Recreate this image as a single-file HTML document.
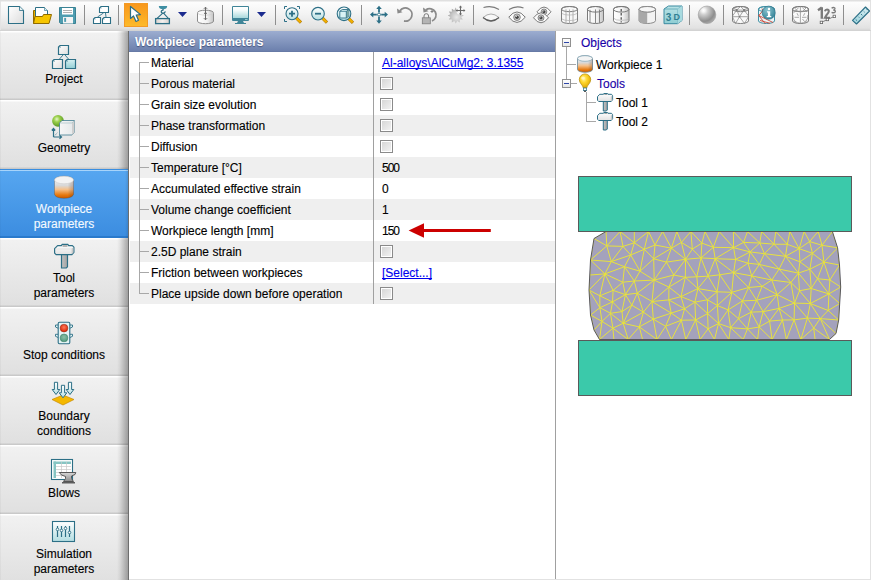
<!DOCTYPE html>
<html><head><meta charset="utf-8"><style>
*{box-sizing:border-box}
html,body{margin:0;padding:0;width:871px;height:580px;overflow:hidden;background:#fff;font-family:"Liberation Sans", sans-serif;font-size:12px;color:#000}
.pt,.pv,.bl,.tt{-webkit-text-stroke:0.12px currentColor}
#tb{position:absolute;left:0;top:0;width:871px;height:31px;background:linear-gradient(#e0e0e0 0,#e0e0e0 1px,#fdfdfd 2px,#f3f3f3 14px,#e2e2e2 28px,#d6d6d6 30px,#d0d0d0 31px)}
.sep{position:absolute;top:5px;width:1px;height:20px;background:#8e8e8e}
.ti{position:absolute;top:3px;width:24px;height:24px}
#sb{position:absolute;left:0;top:31px;width:129px;height:549px;overflow:hidden;background:#e4e4e4}
.btn{position:absolute;left:0;width:128px;height:69px;background:linear-gradient(#ffffff 0,#ffffff 1px,#f1f1f1 2px,#e0e0e0 67px,#c9c9c9 68px,#c9c9c9 69px)}
.btn:after{content:"";position:absolute;left:0;top:0;width:128px;height:69px;background:linear-gradient(90deg,rgba(0,0,0,0.07) 0,rgba(0,0,0,0) 1px,rgba(0,0,0,0) 117px,rgba(0,0,0,0.06) 120px,rgba(0,0,0,0.28) 127px,rgba(0,0,0,0.3) 128px)}
.btn.sel{background:linear-gradient(#3a8ee0 0,#3a8ee0 1px,#a8d4fa 1px,#a8d4fa 2px,#56a6f0 2px,#3c8de0 67px,#2a7acc 67px,#2a7acc 69px);color:#f4faff}
.btn.sel:after{background:linear-gradient(90deg,rgba(0,0,0,0.05) 0,rgba(0,0,0,0) 1px,rgba(0,0,0,0) 125px,rgba(0,0,0,0.1) 128px)}
.bl{position:absolute;left:0;width:128px;text-align:center;line-height:15px;white-space:nowrap}
.bi{position:absolute;left:52px;width:24px;height:24px}
#sbline{position:absolute;left:128px;top:31px;width:1px;height:549px;background:#6e6e6e}
#pn{position:absolute;left:129px;top:31px;width:426px;height:549px;background:#fff;overflow:hidden}
#hd{position:absolute;left:129px;top:31px;width:426px;height:21px;background:linear-gradient(#9cadd0,#6c80ad 20px,#62759f 21px);color:#fff;font-weight:bold;line-height:21px;padding-left:6px;padding-top:1px;text-shadow:0 1px 1px rgba(40,50,90,0.6)}
.row{position:absolute;left:130px;width:425px;height:21px}
.pt{position:absolute;left:151px;line-height:21px;padding-top:1px;white-space:nowrap;color:#000}
.pv{position:absolute;left:382px;line-height:21px;padding-top:1px;white-space:nowrap;color:#000}
.lnk{color:#0000ee;text-decoration:underline;text-decoration-skip-ink:none}
.hl{position:absolute;left:139px;width:10px;height:1px;background:#a8a8a8}
#vl{position:absolute;left:139px;top:62px;width:1px;height:231px;background:#a8a8a8}
#colsep{position:absolute;left:373px;top:52px;width:1px;height:252px;background:#a0a0a0}
.cb{position:absolute;left:380px;width:13px;height:13px;border:1px solid #8a8a8a;background:linear-gradient(135deg,#d4d4d4,#f4f4f4);box-shadow:inset 0 0 0 1px #fff}
#split{position:absolute;left:555px;top:31px;width:1px;height:549px;background:#a0a0a0}
#tr{position:absolute;left:556px;top:31px;width:315px;height:549px;background:#fff}
.tt{position:absolute;white-space:nowrap;line-height:15px}
.exp{position:absolute;left:562px;width:9px;height:9px;border:1px solid #909090;background:linear-gradient(#fff,#e6e6e6)}
.exp:after{content:"";position:absolute;left:1px;top:3px;width:5px;height:1px;background:#2d46a8}
</style></head><body>
<div id="tb"><div class="sep" style="left:84px"></div><div class="sep" style="left:118px"></div><div class="sep" style="left:222px"></div><div class="sep" style="left:275px"></div><div class="sep" style="left:361px"></div><div class="sep" style="left:473px"></div><div class="sep" style="left:689px"></div><div class="sep" style="left:723px"></div><div class="sep" style="left:783px"></div><div class="sep" style="left:843px"></div><div style="position:absolute;left:870px;top:1px;width:1px;height:29px;background:#e2e2e2"></div><div style="position:absolute;left:0;top:1px;width:1px;height:29px;background:#e4e4e4"></div><svg style="position:absolute;left:0;top:0" width="871" height="31" viewBox="0 0 871 31"><defs>
<linearGradient id="gpage" x1="0" y1="0" x2="1" y2="1"><stop offset="0" stop-color="#ffffff"/><stop offset="1" stop-color="#dcdcdc"/></linearGradient>
<linearGradient id="gorange" x1="0" y1="0" x2="0" y2="1"><stop offset="0" stop-color="#f8961c"/><stop offset="1" stop-color="#fdbb2a"/></linearGradient>
<linearGradient id="gscreen" x1="0" y1="0" x2="0" y2="1"><stop offset="0" stop-color="#ffffff"/><stop offset="0.3" stop-color="#f4fbfb"/><stop offset="1" stop-color="#a9d9dc"/></linearGradient>
<linearGradient id="glens" x1="0" y1="0" x2="0" y2="1"><stop offset="0" stop-color="#ffffff"/><stop offset="1" stop-color="#b6dfe2"/></linearGradient>
<radialGradient id="gsphere" cx="0.33" cy="0.27" r="0.8" fx="0.3" fy="0.25"><stop offset="0" stop-color="#ffffff"/><stop offset="0.12" stop-color="#f4f4f4"/><stop offset="0.3" stop-color="#cfcfcf"/><stop offset="0.75" stop-color="#8e8e8e"/><stop offset="1" stop-color="#b0b0b0"/></radialGradient>
<linearGradient id="gcube" x1="0" y1="0" x2="0" y2="1"><stop offset="0" stop-color="#b9e3e6"/><stop offset="1" stop-color="#8fcdd3"/></linearGradient>
<linearGradient id="gcylr" x1="0" y1="0" x2="1" y2="0"><stop offset="0" stop-color="#ffffff"/><stop offset="0.6" stop-color="#f2f2f2"/><stop offset="1" stop-color="#c4c4c4"/></linearGradient>
<radialGradient id="ginfo" cx="0.4" cy="0.3" r="0.8"><stop offset="0" stop-color="#8ac3cf"/><stop offset="1" stop-color="#2b7d92"/></radialGradient>
<linearGradient id="gbase" x1="0" y1="0" x2="1" y2="0"><stop offset="0" stop-color="#d8d0cc"/><stop offset="0.5" stop-color="#f4f2f0"/><stop offset="1" stop-color="#d8d0cc"/></linearGradient>
<radialGradient id="gsun" cx="0.55" cy="0.6" r="0.6"><stop offset="0" stop-color="#e8e8e8"/><stop offset="0.6" stop-color="#c4c4c4"/><stop offset="1" stop-color="#a0a0a0"/></radialGradient>
<linearGradient id="gruler" x1="0" y1="0" x2="0" y2="1"><stop offset="0" stop-color="#d6eef2"/><stop offset="1" stop-color="#9dd3dc"/></linearGradient>
</defs><path d="M8.5 6.5H19.5L23.5 10.5V23.5H8.5Z" fill="url(#gpage)" stroke="#2c6f86" stroke-width="1.1"/><path d="M19.5 6.5V10.5H23.5" fill="#e8f3f5" stroke="#2c6f86" stroke-width="0.8"/><path d="M33.5 10.5H37L38 11.5H46.5V23.5H33.5Z" fill="#e9ad00" stroke="#8f6a00" stroke-width="1"/><path d="M35.5 7.5H44.5L47.5 10.5V17H35.5Z" fill="#fff" stroke="#2c6f86" stroke-width="1"/><path d="M44.5 7.5V10.5H47.5" fill="#d8eef2" stroke="#2c6f86" stroke-width="0.6"/><path d="M33.5 23.5L35 16.5H42.5L43.5 14.5H51.5L49 23.5Z" fill="#f6c500" stroke="#8f6a00" stroke-width="1"/><path d="M59.5 7.5H75.5V23.5H60.5L59.5 22.5Z" fill="#4f9db0" stroke="#3a8294" stroke-width="1"/><rect x="62" y="8" width="11" height="6.5" fill="#fff"/><rect x="63" y="10" width="9" height="0.9" fill="#a8a8a8"/><rect x="63" y="12" width="9" height="0.9" fill="#a8a8a8"/><rect x="63" y="17" width="10" height="6.5" fill="#f4f4f4"/><rect x="64.2" y="17.9" width="1.9" height="4" fill="#4f9db0"/><path d="M101 6.5H108.5V12.5H99.5V8Z" fill="#fff" stroke="#2c6f86" stroke-width="1.1"/><rect x="100.5" y="7.5" width="1" height="1" fill="#2c6f86" opacity="0.7"/><path d="M95 17.5H100.5V23.5H93.5V19Z" fill="#fff" stroke="#2c6f86" stroke-width="1.1"/><rect x="94.5" y="18.5" width="1" height="1" fill="#2c6f86" opacity="0.7"/><path d="M104 17.5H110.5V23.5H102.5V19Z" fill="#fff" stroke="#2c6f86" stroke-width="1.1"/><rect x="103.5" y="18.5" width="1" height="1" fill="#2c6f86" opacity="0.7"/><path d="M103.5 13L97.5 17M105.5 13L106 17" stroke="#2c6f86" stroke-width="0.9" fill="none"/><rect x="124" y="3" width="24" height="24" fill="url(#gorange)"/><rect x="124.5" y="3.5" width="23" height="23" fill="none" stroke="#f39a25" stroke-width="1"/><path d="M130.5 6.5V18.5L133.5 16L136 21.5L138.5 20.3L136.2 15L140.5 14.6Z" fill="#fff" stroke="#2c6f86" stroke-width="1.2" stroke-linejoin="round"/><path d="M158.8 6H167.2Q167 9.2 163 9.2Q159 9.2 158.8 6Z" fill="#3f8fa3"/><path d="M163 9V10C161 10.3 160.6 12.6 162.3 13.1C163.8 13.5 165 12.6 165.3 11.3" stroke="#2c6f86" stroke-width="1.3" fill="none"/><path d="M162.8 13.2L156.5 18.8M163.5 13.2L168.8 18.8" stroke="#2c6f86" stroke-width="1.1" fill="none"/><rect x="155.6" y="18.6" width="13.8" height="5" fill="url(#gbase)" stroke="#2c6f86" stroke-width="1.3"/><path d="M178 12H187L182.5 17Z" fill="#1b2b8e"/><path d="M257 12H266L261.5 17Z" fill="#1b2b8e"/><path d="M197.5 12.7V21.2A8 2.5 0 0 0 213.5 21.2V12.7A8 2.5 0 0 0 197.5 12.7Z" fill="url(#gcylr)" stroke="#8c8c8c" stroke-width="1"/><path d="M197.5 12.7A8 2.5 0 0 0 213.5 12.7" fill="none" stroke="#d0d0d0" stroke-width="0.7"/><path d="M205.5 7.2V19.8M203.9 8.8L205.5 7.2L207.1 8.8M203.9 18.2L205.5 19.8L207.1 18.2M204 13.3H207" stroke="#6a6a6a" stroke-width="1" fill="none"/><rect x="232" y="6" width="17" height="15" rx="1" fill="#3f8598"/><rect x="233" y="7" width="15" height="11" fill="url(#gscreen)"/><rect x="245" y="19" width="2.5" height="0.8" fill="#a9d9dc"/><path d="M238 21H243L244 23H246V24H235V23H237Z" fill="#3f8598"/><path d="M284.5 9V6.5H287M297 6.5H299.5V9M284.5 19V21.5H287" stroke="#2c6f86" stroke-width="1" fill="none"/><path d="M295.5 17.2L301 22.7" stroke="#b07a10" stroke-width="3.2" stroke-linecap="butt"/><path d="M295.5 17.2L300.6 22.299999999999997" stroke="#f0b000" stroke-width="2.2" stroke-linecap="butt"/><circle cx="292" cy="13.7" r="6" fill="url(#glens)" stroke="#2c6f86" stroke-width="1.1"/><path d="M289 13.7H295M292 10.7V16.7" stroke="#2c6f86" stroke-width="1.8"/><path d="M321.5 17.2L327 22.7" stroke="#b07a10" stroke-width="3.2" stroke-linecap="butt"/><path d="M321.5 17.2L326.6 22.299999999999997" stroke="#f0b000" stroke-width="2.2" stroke-linecap="butt"/><circle cx="318" cy="13.7" r="6.3" fill="url(#glens)" stroke="#2c6f86" stroke-width="1.1"/><path d="M315 13.7H321" stroke="#2c6f86" stroke-width="1.8"/><path d="M347.5 17.3L353 22.8" stroke="#b07a10" stroke-width="3.2" stroke-linecap="butt"/><path d="M347.5 17.3L352.6 22.4" stroke="#f0b000" stroke-width="2.2" stroke-linecap="butt"/><circle cx="344" cy="13.8" r="6.8" fill="url(#glens)" stroke="#2c6f86" stroke-width="1.1"/><path d="M339.8 11.3L342.3 9.5H348.8V16.2L346.3 18H339.8Z" fill="#d8f3f5" stroke="#2c6f86" stroke-width="0.9" stroke-linejoin="round"/><path d="M346.3 11.3V18L348.8 16.2V9.5Z" fill="#7aa5a2"/><path d="M339.8 11.3H346.3V18M346.3 11.3L348.8 9.5" stroke="#2c6f86" stroke-width="0.8" fill="none"/><path d="M379 8V12.5M379 16.8V21.5M371.5 14.6H376.8M381.2 14.6H386" stroke="#2c6f86" stroke-width="1.8"/><path d="M379 5.8L376.2 9H381.8ZM379 23.8L376.2 20.5H381.8ZM370 14.6L373.3 11.8V17.4ZM388 14.6L384.7 11.8V17.4Z" fill="#2c6f86"/><circle cx="379" cy="14.6" r="1.5" fill="#fff" stroke="#2c6f86" stroke-width="0.9"/><path d="M400 10.8A6.6 6.6 0 1 1 404 21" stroke="#8a8a8a" stroke-width="1.8" fill="none"/><path d="M397 8.5L402.5 12.3L397.5 13.5Z" fill="#8a8a8a"/><path d="M426 9.8A6.4 6.4 0 1 1 432 21" stroke="#8a8a8a" stroke-width="1.8" fill="none"/><path d="M423 7.5L428.5 11.3L423.5 12.5Z" fill="#8a8a8a"/><rect x="422.3" y="17.8" width="8" height="6" fill="#b4b4b4" stroke="#7e7e7e" stroke-width="0.8"/><path d="M424 17.8V16A2.3 2.3 0 0 1 428.6 16V17.8" stroke="#7a7a7a" stroke-width="1" fill="none"/><path d="M430.5 11.5H433.5M432 10V13" stroke="#6e6e6e" stroke-width="0.8"/><polygon points="463.80,15.60 461.21,17.05 462.73,19.60 459.76,19.56 459.80,22.53 457.25,21.01 455.80,23.60 454.35,21.01 451.80,22.53 451.84,19.56 448.87,19.60 450.39,17.05 447.80,15.60 450.39,14.15 448.87,11.60 451.84,11.64 451.80,8.67 454.35,10.19 455.80,7.60 457.25,10.19 459.80,8.67 459.76,11.64 462.73,11.60 461.21,14.15" fill="url(#gsun)"/><circle cx="461" cy="10.3" r="4.9" fill="#f6f6f6"/><path d="M460.5 6.8V14.2M456.8 10.5H464.2" stroke="#6a6a6a" stroke-width="1.1"/><path d="M460.5 5.6L458.9 7.4H462.1ZM460.5 15.4L458.9 13.6H462.1ZM455.6 10.5L457.4 8.9V12.1ZM465.4 10.5L463.6 8.9V12.1Z" fill="#6a6a6a"/><path d="M483.5 7.5Q492 5 499 9.5" stroke="#7a7a7a" stroke-width="1.1" fill="none"/><path d="M483 17.5Q491 10.5 499 17.5Q491 24.5 483 17.5Z" fill="#f8f8f8" stroke="#9a9a9a" stroke-width="0.8"/><path d="M483 17.5Q491 24.5 499 17.5" stroke="#5e5e5e" stroke-width="1.3" fill="none"/><path d="M509 9.5Q516 5 523.5 8" stroke="#7a7a7a" stroke-width="1.2" fill="none"/><path d="M508.75 17.2Q517 6.699999999999999 525.25 17.2Q517 27.7 508.75 17.2Z" fill="#fbfbfb" stroke="#6a6a6a" stroke-width="0.9"/><circle cx="517" cy="17.2" r="3.3" fill="#cfcfcf" stroke="#707070" stroke-width="0.8"/><circle cx="517" cy="17.2" r="1.8" fill="#454545"/><circle cx="516.3" cy="16.4" r="0.55" fill="#f0f0f0"/><path d="M537.0 11.8Q544 2.3000000000000007 551.0 11.8Q544 21.3 537.0 11.8Z" fill="#fbfbfb" stroke="#6a6a6a" stroke-width="0.9"/><circle cx="544" cy="11.8" r="2.8049999999999997" fill="#cfcfcf" stroke="#707070" stroke-width="0.8"/><circle cx="544" cy="11.8" r="1.53" fill="#454545"/><circle cx="543.405" cy="11.120000000000001" r="0.4675" fill="#f0f0f0"/><path d="M533.5 17.8Q541 7.800000000000001 548.5 17.8Q541 27.8 533.5 17.8Z" fill="#fbfbfb" stroke="#6a6a6a" stroke-width="0.9"/><circle cx="541" cy="17.8" r="2.9699999999999998" fill="#cfcfcf" stroke="#707070" stroke-width="0.8"/><circle cx="541" cy="17.8" r="1.62" fill="#454545"/><circle cx="540.37" cy="17.080000000000002" r="0.49500000000000005" fill="#f0f0f0"/><path d="M561.5 9.1L561.5 20.9A8.0 2.6 0 0 0 577.5 20.9L577.5 9.1A8.0 2.6 0 0 0 561.5 9.1Z" fill="#f7f7f7" stroke="#7e7e7e" stroke-width="1"/><ellipse cx="569.5" cy="9.1" rx="8.0" ry="2.6" fill="none" stroke="#7e7e7e" stroke-width="1"/><path d="M566 9.3V22.8M569.5 9.5V23M573 9.3V22.8" stroke="#a0a0a0" stroke-width="0.8"/><path d="M562 13.5A8 2.4 0 0 0 577 13.5M562 19A8 2.4 0 0 0 577 19" stroke="#b0b0b0" stroke-width="0.7" fill="none"/><path d="M587.5 9.3L587.5 20.7A8.0 2.8 0 0 0 603.5 20.7L603.5 9.3A8.0 2.8 0 0 0 587.5 9.3Z" fill="url(#gcylr)" stroke="#7a7a7a" stroke-width="1"/><ellipse cx="595.5" cy="9.3" rx="8.0" ry="2.8" fill="none" stroke="#7a7a7a" stroke-width="1"/><path d="M590 9.8V22.5M595.5 9.4V23.2M599.5 9.6V22.8" stroke="#7a7a7a" stroke-width="0.9"/><path d="M613.5 9.3L613.5 20.7A7.75 2.8 0 0 0 629.0 20.7L629.0 9.3A7.75 2.8 0 0 0 613.5 9.3Z" fill="url(#gcylr)" stroke="#7a7a7a" stroke-width="1"/><ellipse cx="621.25" cy="9.3" rx="7.75" ry="2.8" fill="none" stroke="#7a7a7a" stroke-width="1"/><path d="M621.2 9V22.5" stroke="#4a4a4a" stroke-width="1.2" stroke-dasharray="2.5 1.6"/><path d="M614 18.5A7.7 2.4 0 0 0 629 18.5" stroke="#b0b0b0" stroke-width="0.7" fill="none"/><path d="M639 9.3L639 20.7A8.25 2.8 0 0 0 655.5 20.7L655.5 9.3A8.25 2.8 0 0 0 639 9.3Z" fill="#f2f2f2" stroke="#8a8a8a" stroke-width="1"/><ellipse cx="647.25" cy="9.3" rx="8.25" ry="2.8" fill="none" stroke="#8a8a8a" stroke-width="1"/><path d="M639 9.3V20.7A8.25 2.8 0 0 0 647.2 23.5V9.3Z" fill="#a8a8a8"/><ellipse cx="647.25" cy="9.3" rx="8.25" ry="2.8" fill="#f6f6f6" stroke="#8a8a8a" stroke-width="1"/><path d="M664 9L668.5 6H682V20.5L677.5 23.7H664Z" fill="url(#gcube)" stroke="#3b8aa0" stroke-width="1"/><path d="M664 9H677.5V23.7M677.5 9L682 6" stroke="#5aa2b2" stroke-width="0.8" fill="none"/><path d="M677.5 9L682 6V20.5L677.5 23.7Z" fill="#a8dadf"/><text x="665.8" y="20.5" font-family="Liberation Sans" font-weight="bold" font-size="10" fill="#2f7f93">3</text><text x="673.5" y="19.5" font-family="Liberation Sans" font-weight="bold" font-size="9" fill="#2f7f93">D</text><circle cx="707" cy="14.8" r="8.8" fill="url(#gsphere)" stroke="#9a9a9a" stroke-width="0.6"/><path d="M732.5 9.1L732.5 20.9A8.0 2.6 0 0 0 748.5 20.9L748.5 9.1A8.0 2.6 0 0 0 732.5 9.1Z" fill="#fafafa" stroke="#7e7e7e" stroke-width="1"/><ellipse cx="740.5" cy="9.1" rx="8.0" ry="2.6" fill="none" stroke="#7e7e7e" stroke-width="1"/><path d="M732.5 10.1H748.5M732.5 16.7H748.5M740.5 6.6L736.8 9.9L739.5 16.7L744 9.9L740.5 6.6M733 7.8L736.8 9.9M748 7.8L744 9.9M736.8 9.9L732.5 16M744 9.9L748.5 16M739.5 16.7L735.5 23.5M739.5 16.7L744.5 23.5M732.5 16.7L735.5 23.5M748.5 16.7L744.5 23.5" stroke="#8a8a8a" stroke-width="0.75" fill="none"/><circle cx="736.8" cy="9.9" r="0.9" fill="#777"/><circle cx="744" cy="9.9" r="0.9" fill="#777"/><circle cx="739.5" cy="16.7" r="0.8" fill="#777"/><path d="M758.5 9.1L758.5 20.9A8.0 2.6 0 0 0 774.5 20.9L774.5 9.1A8.0 2.6 0 0 0 758.5 9.1Z" fill="#eaf6f8" stroke="#3f8fa3" stroke-width="1"/><ellipse cx="766.5" cy="9.1" rx="8.0" ry="2.6" fill="none" stroke="#3f8fa3" stroke-width="1"/><path d="M766 7L758.8 15.5L765 23.5M758.8 15.5L773 22.5M762 8.5L764 14M760 20.5L770 23.3" stroke="#cc4636" stroke-width="0.9" fill="none"/><circle cx="768.7" cy="12.7" r="6.6" fill="url(#ginfo)" stroke="#2b7186" stroke-width="0.6"/><circle cx="769" cy="9" r="1.2" fill="#fff"/><path d="M767 11.2H770.2V16.1H771.3V17.3H766.7V16.1H767.9V12.4H767Z" fill="#fff"/><path d="M792.5 9.1L792.5 20.9A8.0 2.6 0 0 0 808.5 20.9L808.5 9.1A8.0 2.6 0 0 0 792.5 9.1Z" fill="#fafafa" stroke="#7a7a7a" stroke-width="1"/><ellipse cx="800.5" cy="9.1" rx="8.0" ry="2.6" fill="none" stroke="#7a7a7a" stroke-width="1"/><path d="M800.4 6.5V23.8M792.5 11.2H808.5M794 7.5L798.5 12M798.5 7.8L793 13.5M802.5 7.8L807 12M806.5 7.5L802 12M794.5 17.3H799M802 17.3H806.5M797 13.2L798.3 15.8M803.5 15.8L804.8 13.2M793 15A7.5 7 0 0 0 800.4 23.3A7.5 7 0 0 0 807.8 15M794 20.5L795.5 22.5M806.8 20.5L805.3 22.5M802.5 19L804.5 21.5" stroke="#8e8e8e" stroke-width="0.75" fill="none"/><path d="M821.8 7.3V18.8M818 10.2L821.8 7.6" stroke="#7a7a7a" stroke-width="2.4" fill="none"/><path d="M824.9 11.2Q825.3 9.5 827 9.5Q828.8 9.5 828.8 11.3Q828.8 12.8 826.6 15L825 17.7H830" stroke="#7a7a7a" stroke-width="2.1" fill="none" stroke-linejoin="miter"/><path d="M831.6 8.3Q833.2 6.9 834.8 8Q835.6 9.5 833.4 10Q836 10.6 835.2 12Q833.8 13.3 831.6 12.3" stroke="#7a7a7a" stroke-width="1.3" fill="none"/><path d="M821.4 22.4L827.4 19.5L834.3 16.4" stroke="#777" stroke-width="0.8"/><rect x="820.2" y="21.2" width="2.4" height="2.4" fill="#fff" stroke="#666" stroke-width="0.8"/><rect x="826.2" y="18.3" width="2.4" height="2.4" fill="#fff" stroke="#666" stroke-width="0.8"/><rect x="833.1" y="15.2" width="2.4" height="2.4" fill="#fff" stroke="#666" stroke-width="0.8"/><path d="M852.5 20.3L865.5 7L869.5 11L856.5 24Z" fill="url(#gruler)" stroke="#2c6f86" stroke-width="1.1" stroke-linejoin="round"/><path d="M855.7 19.4L857 20.7M858.4 16.7L859.3 17.6M861 14L862.3 15.3M863.7 11.3L864.6 12.2M866.3 8.7L867.6 10" stroke="#2c6f86" stroke-width="0.9"/></svg></div>
<div id="sb"><div class="btn" style="top:0px"><div class="bi" style="top:14px"></div><div class="bl" style="top:41px">Project</div></div>
<div class="btn" style="top:69px"><div class="bi" style="top:14px"></div><div class="bl" style="top:41px">Geometry</div></div>
<div class="btn sel" style="top:138px"><div class="bi" style="top:7px"></div><div class="bl" style="top:33px">Workpiece</div><div class="bl" style="top:48px">parameters</div></div>
<div class="btn" style="top:207px"><div class="bi" style="top:7px"></div><div class="bl" style="top:33px">Tool</div><div class="bl" style="top:48px">parameters</div></div>
<div class="btn" style="top:276px"><div class="bi" style="top:14px"></div><div class="bl" style="top:41px">Stop conditions</div></div>
<div class="btn" style="top:345px"><div class="bi" style="top:7px"></div><div class="bl" style="top:33px">Boundary</div><div class="bl" style="top:48px">conditions</div></div>
<div class="btn" style="top:414px"><div class="bi" style="top:14px"></div><div class="bl" style="top:41px">Blows</div></div>
<div class="btn" style="top:483px"><div class="bi" style="top:7px"></div><div class="bl" style="top:33px">Simulation</div><div class="bl" style="top:48px">parameters</div></div></div>
<svg style="position:absolute;left:0;top:0" width="129" height="580" viewBox="0 0 129 580"><defs>
<linearGradient id="sfill" x1="0" y1="0" x2="1" y2="1"><stop offset="0" stop-color="#ffffff"/><stop offset="1" stop-color="#dedede"/></linearGradient>
<linearGradient id="stealf" x1="0" y1="0" x2="0" y2="1"><stop offset="0" stop-color="#d6f0f2"/><stop offset="1" stop-color="#93cfd5"/></linearGradient>
<radialGradient id="sgreen" cx="0.4" cy="0.35" r="0.7"><stop offset="0" stop-color="#e6f7c8"/><stop offset="0.35" stop-color="#9bd04c"/><stop offset="1" stop-color="#4f8f1d"/></radialGradient>
<linearGradient id="scube" x1="0" y1="0" x2="1" y2="0"><stop offset="0" stop-color="#f6f6f6"/><stop offset="1" stop-color="#e4e8ea"/></linearGradient>
<linearGradient id="swp" x1="0" y1="0" x2="0" y2="1"><stop offset="0" stop-color="#ffffff"/><stop offset="0.42" stop-color="#d8d8d8"/><stop offset="0.6" stop-color="#f5c08a"/><stop offset="0.85" stop-color="#e6780e"/><stop offset="1" stop-color="#c85a00"/></linearGradient>
<linearGradient id="swph" x1="0" y1="0" x2="1" y2="0"><stop offset="0" stop-color="#000" stop-opacity="0"/><stop offset="0.7" stop-color="#000" stop-opacity="0"/><stop offset="1" stop-color="#602000" stop-opacity="0.25"/></linearGradient>
<linearGradient id="shammer" x1="0" y1="0" x2="0" y2="1"><stop offset="0" stop-color="#ffffff"/><stop offset="1" stop-color="#e2e2e2"/></linearGradient>
<linearGradient id="shandle" x1="0" y1="0" x2="1" y2="0"><stop offset="0" stop-color="#c2c2c2"/><stop offset="1" stop-color="#a2a2a2"/></linearGradient>
<radialGradient id="sred" cx="0.5" cy="0.4" r="0.6"><stop offset="0" stop-color="#ff7a5a"/><stop offset="1" stop-color="#d82000"/></radialGradient>
<radialGradient id="sgrn" cx="0.5" cy="0.4" r="0.6"><stop offset="0" stop-color="#8cc0a8"/><stop offset="1" stop-color="#4f9a7e"/></radialGradient>
<linearGradient id="sarrow" x1="0" y1="0" x2="0" y2="1"><stop offset="0" stop-color="#ffffff"/><stop offset="1" stop-color="#b8e0e4"/></linearGradient>
<linearGradient id="sanvil" x1="0" y1="0" x2="0" y2="1"><stop offset="0" stop-color="#d8d8d8"/><stop offset="1" stop-color="#8a8a8a"/></linearGradient>
<linearGradient id="sbox" x1="0" y1="0" x2="0" y2="1"><stop offset="0" stop-color="#ffffff"/><stop offset="1" stop-color="#b2dde1"/></linearGradient>
<radialGradient id="sbulb" cx="0.4" cy="0.35" r="0.65"><stop offset="0" stop-color="#fff3b0"/><stop offset="0.4" stop-color="#ffd830"/><stop offset="1" stop-color="#e0a800"/></radialGradient>
</defs><path d="M60 45.5H68.5V54.5H58.5V47Z" fill="url(#sfill)" stroke="#2c6f86" stroke-width="1.2"/><rect x="59.6" y="46.6" width="1" height="1" fill="#2c6f86"/><path d="M54 59.5H62.5V68.5H52.5V61Z" fill="url(#sfill)" stroke="#2c6f86" stroke-width="1.2"/><rect x="53.6" y="60.6" width="1" height="1" fill="#2c6f86"/><path d="M67 59.5H75.5V68.5H65.5V61Z" fill="url(#stealf)" stroke="#2c6f86" stroke-width="1.2"/><rect x="66.6" y="60.6" width="1" height="1" fill="#2c6f86"/><path d="M63 55L59.5 59M65 55L68.5 59" stroke="#2c6f86" stroke-width="0.9"/><path d="M53.5 137V129M51.8 130.5L53.5 128.5L55.2 130.5M53.5 137H61M59.5 135.3L61.5 137L59.5 138.7" stroke="#2c6f86" stroke-width="1.2" fill="none"/><path d="M54 136.5L57.5 132.5" stroke="#2c6f86" stroke-width="0.7" stroke-dasharray="1 1"/><circle cx="58" cy="120.9" r="5.9" fill="url(#sgreen)"/><path d="M59.5 123L62 120.5H74.5V132.5L72 135H59.5Z" fill="url(#scube)" stroke="#2c6f86" stroke-width="0.9" stroke-opacity="0.8"/><path d="M72 123V135L74.5 132.5V120.5Z" fill="#cfcfcf"/><path d="M59.5 123H72L74.5 120.5" stroke="#9ab8c0" stroke-width="0.6" fill="none"/><path d="M54.5 180V194.5L55 195A9 3.3 0 0 0 73 195L73.5 194.5V180A9.5 3.8 0 0 0 54.5 180Z" fill="url(#swp)" stroke="#4a3a30" stroke-width="0.6" stroke-opacity="0.5"/><path d="M54.5 180V194.5L55 195A9 3.3 0 0 0 73 195L73.5 194.5V180Z" fill="url(#swph)"/><ellipse cx="64" cy="180" rx="9.5" ry="3.8" fill="#f3f3f3" stroke="#c4c4c4" stroke-width="0.5"/><path d="M61.5 254.5H67.5V266.8L66.3 268H61.5Z" fill="url(#shandle)" stroke="#2c6f86" stroke-width="1.2"/><path d="M54.6 248.6L57.6 245.6H61.6L62 244.4H68L68.4 245.6H72.4L73.9 247.1V252.3L71.9 254.6H56.1L54.6 253.1Z" fill="url(#shammer)" stroke="#2c6f86" stroke-width="1.2" stroke-linejoin="round"/><path d="M62.4 245H67.6L67.4 247H62.6Z" fill="#b4b4b4"/><path d="M71.6 248.6V254H72L73.3 252.4V247.4Z" fill="#c8c8c8"/><path d="M55.5 249H72" stroke="#d8d8d8" stroke-width="0.6"/><path d="M58 325H55.5V327L58 328.2M70 325H72.5V327L70 328.2M58 334.3H55.5V336.3L58 337.5M70 334.3H72.5V336.3L70 337.5" fill="#e6f4f5" stroke="#2c6f86" stroke-width="0.9"/><rect x="58.2" y="322.2" width="11.6" height="21.5" rx="1.2" fill="#e4f4f5" stroke="#2c6f86" stroke-width="1.1"/><circle cx="64" cy="328.1" r="3.9" fill="url(#sred)" stroke="#8a2a1a" stroke-width="0.5"/><circle cx="64" cy="337.9" r="3.9" fill="url(#sgrn)" stroke="#3a7a62" stroke-width="0.5"/><path d="M52 399.5L63 395L74 399.5L63 405Z" fill="#f4b800" stroke="#c88a00" stroke-width="0.7"/><path d="M54.4 382.3H57.6V389.5H59.8L56 394.5L52.2 389.5H54.4Z" fill="url(#sarrow)" stroke="#2c6f86" stroke-width="1"/><path d="M68.4 382.3H71.6V389.5H73.8L70 394.5L66.2 389.5H68.4Z" fill="url(#sarrow)" stroke="#2c6f86" stroke-width="1"/><path d="M61.4 385.3H64.6V392.8H66.8L63 397.8L59.2 392.8H61.4Z" fill="url(#sarrow)" stroke="#2c6f86" stroke-width="1"/><rect x="51.5" y="459.5" width="21" height="20" fill="#fff" stroke="#2c6f86" stroke-width="1.1"/><rect x="53.5" y="461.5" width="17.5" height="2.5" fill="#86c5c3"/><rect x="53.5" y="461.5" width="2.5" height="16.5" fill="#86c5c3"/><path d="M56 466.5H71M56 469.5H71M56 472.5H71M56 475.5H71M61.5 462V478M66.5 462V478" stroke="#c8c8c8" stroke-width="0.7"/><path d="M59.3 472.5H75.8L75 474.5L71.5 476V478.5L73.5 481.5H63.5L65.5 478.5V476.5L61.5 475Z" fill="url(#sanvil)" stroke="#4a4a4a" stroke-width="0.9" stroke-linejoin="round"/><path d="M62 482.8H75" stroke="#3a3a3a" stroke-width="1.2"/><rect x="52.5" y="521.5" width="22" height="20" fill="url(#sbox)" stroke="#2c6f86" stroke-width="1.1"/><path d="M57.5 526V537" stroke="#2c6f86" stroke-width="1.2"/><circle cx="57.5" cy="529.4" r="1.3" fill="#fff" stroke="#2c6f86" stroke-width="0.9"/><path d="M61.5 526V537" stroke="#2c6f86" stroke-width="1.2"/><circle cx="61.5" cy="530.5" r="1.3" fill="#fff" stroke="#2c6f86" stroke-width="0.9"/><path d="M65.5 526V537" stroke="#2c6f86" stroke-width="1.2"/><circle cx="65.5" cy="528.4" r="1.3" fill="#fff" stroke="#2c6f86" stroke-width="0.9"/><path d="M69.5 526V537" stroke="#2c6f86" stroke-width="1.2"/><circle cx="69.5" cy="532.5" r="1.3" fill="#fff" stroke="#2c6f86" stroke-width="0.9"/></svg>
<div id="sbline"></div>
<div id="pn"></div>
<div id="hd">Workpiece parameters</div>
<div class="row" style="top:52px;background:#ffffff"></div>
<div class="hl" style="top:62px"></div>
<div class="pt" style="top:52px">Material</div>
<div class="pv lnk" style="top:52px">Al-alloys\AlCuMg2; 3.1355</div>
<div class="row" style="top:73px;background:#efefef"></div>
<div class="hl" style="top:83px"></div>
<div class="pt" style="top:73px">Porous material</div>
<div class="cb" style="top:77px"></div>
<div class="row" style="top:94px;background:#ffffff"></div>
<div class="hl" style="top:104px"></div>
<div class="pt" style="top:94px">Grain size evolution</div>
<div class="cb" style="top:98px"></div>
<div class="row" style="top:115px;background:#efefef"></div>
<div class="hl" style="top:125px"></div>
<div class="pt" style="top:115px">Phase transformation</div>
<div class="cb" style="top:119px"></div>
<div class="row" style="top:136px;background:#ffffff"></div>
<div class="hl" style="top:146px"></div>
<div class="pt" style="top:136px">Diffusion</div>
<div class="cb" style="top:140px"></div>
<div class="row" style="top:157px;background:#efefef"></div>
<div class="hl" style="top:167px"></div>
<div class="pt" style="top:157px">Temperature [°C]</div>
<div class="pv" style="top:157px;letter-spacing:-1px">500</div>
<div class="row" style="top:178px;background:#ffffff"></div>
<div class="hl" style="top:188px"></div>
<div class="pt" style="top:178px">Accumulated effective strain</div>
<div class="pv" style="top:178px;letter-spacing:-1px">0</div>
<div class="row" style="top:199px;background:#efefef"></div>
<div class="hl" style="top:209px"></div>
<div class="pt" style="top:199px">Volume change coefficient</div>
<div class="pv" style="top:199px;letter-spacing:-1px">1</div>
<div class="row" style="top:220px;background:#ffffff"></div>
<div class="hl" style="top:230px"></div>
<div class="pt" style="top:220px">Workpiece length [mm]</div>
<div class="pv" style="top:220px;letter-spacing:-1px">150</div>
<div class="row" style="top:241px;background:#efefef"></div>
<div class="hl" style="top:251px"></div>
<div class="pt" style="top:241px">2.5D plane strain</div>
<div class="cb" style="top:245px"></div>
<div class="row" style="top:262px;background:#ffffff"></div>
<div class="hl" style="top:272px"></div>
<div class="pt" style="top:262px">Friction between workpieces</div>
<div class="pv lnk" style="top:262px">[Select...]</div>
<div class="row" style="top:283px;background:#efefef"></div>
<div class="hl" style="top:293px"></div>
<div class="pt" style="top:283px">Place upside down before operation</div>
<div class="cb" style="top:287px"></div>
<div id="vl"></div>
<div id="colsep"></div>
<svg style="position:absolute;left:400px;top:218px" width="100" height="25" viewBox="400 218 100 25"><path d="M424 228.9H490.8V232H424Z" fill="#cc0000"/><path d="M408.6 230.45L424 223.2V237.7Z" fill="#cc0000"/></svg>
<div id="split"></div>
<div id="tr"></div>
<div class="exp" style="top:38px"></div><div class="exp" style="top:79px"></div><div style="position:absolute;left:566px;top:47px;width:1px;height:32px;background:#a8a8a8"></div><div style="position:absolute;left:567px;top:64px;width:9px;height:1px;background:#a8a8a8"></div><div style="position:absolute;left:571px;top:83px;width:6px;height:1px;background:#a8a8a8"></div><div style="position:absolute;left:586px;top:92px;width:1px;height:30px;background:#a8a8a8"></div><div style="position:absolute;left:587px;top:102px;width:9px;height:1px;background:#a8a8a8"></div><div style="position:absolute;left:587px;top:121px;width:9px;height:1px;background:#a8a8a8"></div><div class="tt" style="left:581px;top:36px;color:#1800a8">Objects</div><div class="tt" style="left:596px;top:57.5px">Workpiece 1</div><div class="tt" style="left:597px;top:76.5px;color:#1800a8">Tools</div><div class="tt" style="left:616px;top:96px">Tool 1</div><div class="tt" style="left:616px;top:115px">Tool 2</div><svg style="position:absolute;left:0;top:0" width="871" height="140" viewBox="0 0 871 140"><path d="M577.5 58.5V69.5A7.5 2.8 0 0 0 592.5 69.5V58.5A7.5 2.8 0 0 0 577.5 58.5Z" fill="url(#swp)" stroke="#6a8898" stroke-width="0.8"/><path d="M577.5 58.5V69.5A7.5 2.8 0 0 0 592.5 69.5V58.5Z" fill="url(#swph)"/><ellipse cx="585" cy="58.5" rx="7.5" ry="2.8" fill="#f4f4f4" stroke="#7fa3b3" stroke-width="0.7"/><path d="M583.3 88C583 85 579.3 83.5 579.3 79.6A5.7 5.7 0 0 1 590.7 79.6C590.7 83.5 587 85 586.7 88Z" fill="url(#sbulb)" stroke="#b48a00" stroke-width="0.7"/><rect x="583.4" y="88" width="3.2" height="2.6" fill="#fff" stroke="#3d7f96" stroke-width="0.8"/><rect x="584" y="90.6" width="2" height="1.2" fill="#333"/><ellipse cx="583" cy="78" rx="1.8" ry="1.5" fill="#fff6c8" opacity="0.8"/><g transform="translate(0 0)"><path d="M603.3 101.3H607.3V110L606.3 111H603.3Z" fill="url(#shandle)" stroke="#2c6f86" stroke-width="1"/><path d="M597.5 96.7L599.7 94.3H603.5L603.8 93.5H607.6L607.9 94.3H611.5L612.6 95.7V99.7L611.2 101.5H598.7L597.5 100.3Z" fill="url(#shammer)" stroke="#2c6f86" stroke-width="1" stroke-linejoin="round"/><path d="M604.2 93.9H607.2L607 95H604.4Z" fill="#a8a8a8"/><path d="M610.8 96.5V101H611.6L612.2 99.5V96Z" fill="#c8c8c8"/></g><g transform="translate(0 19)"><path d="M603.3 101.3H607.3V110L606.3 111H603.3Z" fill="url(#shandle)" stroke="#2c6f86" stroke-width="1"/><path d="M597.5 96.7L599.7 94.3H603.5L603.8 93.5H607.6L607.9 94.3H611.5L612.6 95.7V99.7L611.2 101.5H598.7L597.5 100.3Z" fill="url(#shammer)" stroke="#2c6f86" stroke-width="1" stroke-linejoin="round"/><path d="M604.2 93.9H607.2L607 95H604.4Z" fill="#a8a8a8"/><path d="M610.8 96.5V101H611.6L612.2 99.5V96Z" fill="#c8c8c8"/></g></svg>
<svg style="position:absolute;left:0;top:0" width="871" height="580" viewBox="0 0 871 580">
<defs><clipPath id="wc"><polygon points="606,231.5 594,238.5 590.5,260 589,290 590.5,315 594,330 599.5,339.5 829.5,339.5 836,333.5 838.7,320 840.7,287 839.5,265 837.6,247.8 832.4,231.5"/></clipPath></defs>
<polygon points="606,231.5 594,238.5 590.5,260 589,290 590.5,315 594,330 599.5,339.5 829.5,339.5 836,333.5 838.7,320 840.7,287 839.5,265 837.6,247.8 832.4,231.5" fill="#a4a2bc"/>
<path d="M634.3 231.5L634.3 242.8M756.6 300.3L763.1 311.7M751.2 312.1L742.5 300.9M684.6 308.8L668.8 299.9M613.9 339.5L628.2 339.5M594.0 238.5L606.8 245.9M690.9 231.5L676.8 231.5M701.0 257.9L701.9 243.1M799.2 248.7L787.3 244.3M828.9 293.9L828.2 310.5M790.9 282.5L799.5 290.8M799.2 248.7L809.6 241.5M676.8 231.5L662.6 231.5M772.0 339.5L769.6 321.1M681.0 296.6L668.8 299.9M707.6 313.6L708.1 328.8M700.1 339.5L714.5 339.5M818.2 231.5L822.0 245.3M748.6 287.5L731.8 292.3M782.5 320.0L794.1 319.9M676.8 231.5L681.4 242.4M685.8 339.5L695.6 320.0M714.5 339.5L728.9 339.5M742.5 300.9L738.5 318.7M644.3 249.3L655.0 245.0M785.5 256.3L799.2 248.7M715.2 258.7L733.6 272.6M623.2 323.3L639.3 326.9M644.3 249.3L634.3 242.8M785.5 256.3L774.0 244.2M815.1 339.5L829.5 339.5M800.8 339.5L813.7 328.1M728.1 309.9L730.5 327.7M644.3 249.3L630.7 255.0M637.3 293.2L631.8 305.2M731.8 292.3L719.8 274.8M715.2 258.7L701.0 257.9M799.2 248.7L812.4 253.3M701.0 257.9L713.3 247.3M811.2 288.5L817.5 278.7M751.7 275.9L748.0 263.2M701.0 257.9L696.8 276.8M810.3 303.5L828.2 310.5M681.0 296.6L697.9 288.6M610.5 313.3L622.0 311.6M815.1 339.5L813.7 328.1M733.6 247.7L743.6 242.4M714.5 339.5L708.1 328.8M681.0 296.6L684.6 308.8M624.5 266.7L634.3 281.0M671.4 248.2L681.4 242.4M750.1 251.9L748.0 263.2M657.0 339.5L639.3 326.9M690.9 231.5L692.3 249.1M708.1 276.2L719.8 274.8M640.0 271.2L634.3 281.0M823.9 262.1L817.5 278.7M764.4 253.7L779.1 269.1M785.5 256.3L764.4 253.7M681.4 242.4L692.3 249.1M623.2 323.3L610.5 313.3M800.8 339.5L815.1 339.5M751.7 275.9L762.1 286.3M662.6 231.5L671.4 248.2M790.9 282.5L798.4 273.1M653.3 319.1L652.0 301.5M624.5 266.7L630.7 255.0M671.2 313.1L681.4 320.2M748.6 287.5L742.5 300.9M613.1 290.4L625.4 294.6M594.0 330.0L602.0 321.4M640.0 271.2L630.7 255.0M829.5 339.5L820.2 318.6M742.5 300.9L756.6 300.3M839.5 265.0L837.6 247.8M701.0 257.9L685.6 259.3M701.0 257.9L708.1 276.2M837.6 247.8L832.4 231.5M653.3 319.1L639.3 326.9M733.6 272.6L719.8 274.8M666.4 262.1L673.8 275.0M671.2 313.1L652.0 301.5M590.5 260.0L589.8 275.0M631.8 305.2L625.4 294.6M772.0 339.5L782.5 320.0M750.1 251.9L735.6 259.4M743.2 339.5L730.5 327.7M657.0 339.5L653.3 319.1M794.5 303.1L779.1 308.4M589.8 275.0L589.0 290.0M761.6 231.5L747.5 231.5M613.1 290.4L622.8 282.2M789.9 231.5L787.3 244.3M747.5 231.5L733.4 231.5M779.1 308.4L794.1 319.9M620.1 231.5L606.8 245.9M622.8 282.2L625.4 294.6M610.5 313.3L612.5 301.9M761.6 231.5L759.8 243.0M642.6 339.5L657.0 339.5M671.4 339.5L665.6 326.3M782.5 320.0L779.1 308.4M589.0 290.0L604.9 273.9M648.5 231.5L634.3 231.5M640.0 271.2L624.5 266.7M800.8 339.5L794.1 319.9M648.5 231.5L644.3 249.3M695.6 320.0L681.4 320.2M654.2 280.1L668.9 287.1M812.4 253.3L809.6 241.5M828.9 293.9L829.9 280.0M828.9 293.9L811.2 288.5M719.2 231.5L733.6 247.7M820.2 318.6L813.7 328.1M759.3 264.4L748.0 263.2M790.9 282.5L777.2 294.7M839.7 303.5L828.9 293.9M715.2 258.7L735.6 259.4M751.2 312.1L738.5 318.7M610.5 313.3L599.9 307.7M599.8 295.8L612.5 301.9M840.7 287.0L829.9 280.0M624.5 266.7L611.3 261.6M685.3 277.3L696.8 276.8M718.5 323.5L730.5 327.7M782.5 320.0L769.6 321.1M717.1 291.8L731.8 292.3M707.4 299.8L717.4 305.5M599.9 307.7L602.0 321.4M812.4 253.3L823.9 262.1M809.9 269.2L817.5 278.7M628.2 339.5L642.6 339.5M747.5 328.9L751.2 312.1M777.2 294.7L771.8 280.0M654.2 280.1L634.3 281.0M610.5 313.3L612.9 328.2M662.6 231.5L648.5 231.5M671.2 313.1L653.3 319.1M785.5 256.3L787.3 244.3M628.2 339.5L612.9 328.2M728.9 339.5L743.2 339.5M822.0 245.3L809.6 241.5M644.3 249.3L640.0 271.2M700.1 339.5L695.6 320.0M774.0 244.2L759.8 243.0M810.3 303.5L811.2 288.5M648.5 231.5L655.0 245.0M777.2 294.7L756.6 300.3M820.2 318.6L828.2 310.5M733.4 231.5L743.6 242.4M733.6 272.6L751.7 275.9M648.5 231.5L634.3 242.8M666.4 262.1L654.2 280.1M701.0 257.9L692.3 249.1M715.2 258.7L719.8 274.8M738.5 318.7L730.5 327.7M829.5 339.5L836.0 333.5M837.6 247.8L822.0 245.3M807.4 318.1L794.1 319.9M612.5 301.9L622.0 311.6M822.0 245.3L823.9 262.1M713.3 247.3L701.9 243.1M836.0 333.5L838.7 320.0M764.4 253.7L759.3 264.4M764.4 253.7L774.0 244.2M695.6 320.0L694.9 302.1M751.2 312.1L756.6 300.3M777.2 294.7L779.1 308.4M832.4 231.5L818.2 231.5M715.2 258.7L713.3 247.3M828.9 293.9L817.5 278.7M771.8 280.0L779.1 269.1M798.4 273.1L779.1 269.1M785.5 256.3L798.4 273.1M839.5 265.0L823.9 262.1M606.0 231.5L620.1 231.5M818.2 231.5L804.1 231.5M590.5 315.0L594.0 330.0M810.3 303.5L828.9 293.9M810.3 303.5L820.2 318.6M589.0 290.0L599.9 307.7M684.6 308.8L681.4 320.2M620.1 231.5L634.3 242.8M665.6 326.3L671.2 313.1M771.8 280.0L751.7 275.9M829.9 280.0L823.9 262.1M798.4 273.1L799.9 261.8M628.2 339.5L639.3 326.9M623.2 323.3L622.0 311.6M671.4 248.2L653.7 258.8M733.6 247.7L735.6 259.4M625.4 294.6L622.0 311.6M809.9 269.2L799.9 261.8M820.2 318.6L807.4 318.1M705.0 231.5L701.9 243.1M671.4 339.5L681.4 320.2M695.6 320.0L707.6 313.6M715.2 258.7L733.6 247.7M818.2 231.5L809.6 241.5M731.8 292.3L717.4 305.5M637.3 293.2L652.0 301.5M829.5 339.5L813.7 328.1M715.2 258.7L708.1 276.2M589.0 290.0L590.5 315.0M809.9 269.2L811.2 288.5M676.8 231.5L671.4 248.2M717.1 291.8L697.9 288.6M590.5 260.0L604.9 273.9M604.9 273.9L624.5 266.7M748.6 287.5L751.7 275.9M733.4 231.5L719.2 231.5M654.2 280.1L652.0 301.5M637.3 293.2L625.4 294.6M747.5 328.9L738.5 318.7M657.0 339.5L671.4 339.5M719.2 231.5L713.3 247.3M623.2 323.3L643.4 312.1M718.5 323.5L728.1 309.9M665.6 326.3L653.3 319.1M735.6 259.4L748.0 263.2M634.3 231.5L620.1 231.5M612.5 301.9L599.9 307.7M599.5 339.5L602.0 321.4M750.1 251.9L759.8 243.0M794.5 303.1L799.5 290.8M748.6 287.5L756.6 300.3M625.4 294.6L634.3 281.0M705.0 231.5L713.3 247.3M654.2 280.1L673.8 275.0M653.7 258.8L655.0 245.0M757.6 339.5L772.0 339.5M685.6 259.3L696.8 276.8M668.8 299.9L668.9 287.1M684.6 308.8L694.9 302.1M599.5 339.5L612.9 328.2M733.6 247.7L713.3 247.3M757.6 339.5L759.1 327.0M631.8 305.2L622.0 311.6M681.0 296.6L694.9 302.1M625.4 294.6L612.5 301.9M654.2 280.1L640.0 271.2M589.0 290.0L599.8 295.8M717.1 291.8L719.8 274.8M759.3 264.4L750.1 251.9M836.0 333.5L820.2 318.6M685.6 259.3L685.3 277.3M743.2 339.5L747.5 328.9M610.5 313.3L602.0 321.4M790.9 282.5L779.1 269.1M799.2 248.7L799.9 261.8M673.8 275.0L685.3 277.3M685.3 277.3L668.9 287.1M718.5 323.5L707.6 313.6M623.0 246.4L634.3 242.8M707.6 313.6L694.9 302.1M604.9 273.9L599.8 295.8M786.4 339.5L782.5 320.0M804.1 231.5L799.2 248.7M769.6 321.1L779.1 308.4M728.9 339.5L718.5 323.5M717.1 291.8L717.4 305.5M697.9 288.6L694.9 302.1M838.7 320.0L828.2 310.5M775.8 231.5L787.3 244.3M790.9 282.5L794.5 303.1M790.9 282.5L771.8 280.0M599.8 295.8L599.9 307.7M623.0 246.4L630.7 255.0M673.8 275.0L685.6 259.3M747.5 231.5L759.8 243.0M631.8 305.2L643.4 312.1M681.0 296.6L685.3 277.3M653.3 319.1L643.4 312.1M838.7 320.0L839.7 303.5M832.4 231.5L822.0 245.3M690.9 231.5L681.4 242.4M613.1 290.4L612.5 301.9M743.2 339.5L757.6 339.5M742.5 300.9L728.1 309.9M620.1 231.5L623.0 246.4M697.9 288.6L696.8 276.8M611.3 261.6L630.7 255.0M623.2 323.3L631.8 305.2M811.2 288.5L799.5 290.8M622.8 282.2L634.3 281.0M733.6 247.7L750.1 251.9M840.7 287.0L828.9 293.9M666.4 262.1L653.7 258.8M666.4 262.1L685.6 259.3M665.6 326.3L681.4 320.2M728.1 309.9L731.8 292.3M717.1 291.8L708.1 276.2M697.9 288.6L685.3 277.3M775.8 231.5L774.0 244.2M590.5 260.0L606.8 245.9M742.5 300.9L731.8 292.3M700.1 339.5L708.1 328.8M810.3 303.5L799.5 290.8M777.2 294.7L762.1 286.3M623.0 246.4L606.8 245.9M751.2 312.1L759.1 327.0M624.5 266.7L622.8 282.2M733.6 272.6L748.0 263.2M701.9 243.1L692.3 249.1M794.5 303.1L807.4 318.1M652.0 301.5L668.9 287.1M671.4 248.2L655.0 245.0M748.6 287.5L733.6 272.6M804.1 231.5L789.9 231.5M728.1 309.9L738.5 318.7M697.9 288.6L708.1 276.2M590.5 260.0L611.3 261.6M611.3 261.6L606.8 245.9M594.0 330.0L599.5 339.5M763.1 311.7L759.1 327.0M777.2 294.7L763.1 311.7M623.0 246.4L611.3 261.6M671.4 248.2L685.6 259.3M705.0 231.5L690.9 231.5M671.2 313.1L668.8 299.9M590.5 315.0L599.9 307.7M590.5 315.0L602.0 321.4M652.0 301.5L643.4 312.1M630.7 255.0L634.3 242.8M642.6 339.5L639.3 326.9M644.3 249.3L653.7 258.8M779.1 308.4L763.1 311.7M811.2 288.5L798.4 273.1M685.6 259.3L692.3 249.1M733.6 272.6L735.6 259.4M728.9 339.5L730.5 327.7M666.4 262.1L671.4 248.2M751.2 312.1L763.1 311.7M829.9 280.0L817.5 278.7M837.6 247.8L823.9 262.1M717.1 291.8L707.4 299.8M690.9 231.5L701.9 243.1M612.9 328.2L602.0 321.4M812.4 253.3L799.9 261.8M719.2 231.5L705.0 231.5M695.6 320.0L708.1 328.8M785.5 256.3L779.1 269.1M657.0 339.5L665.6 326.3M671.4 339.5L685.8 339.5M671.2 313.1L684.6 308.8M613.1 290.4L604.9 273.9M798.4 273.1L799.5 290.8M771.8 280.0L762.1 286.3M652.0 301.5L668.8 299.9M613.1 290.4L599.8 295.8M640.0 271.2L653.7 258.8M685.8 339.5L700.1 339.5M604.9 273.9L611.3 261.6M812.4 253.3L822.0 245.3M697.9 288.6L707.4 299.8M708.1 276.2L696.8 276.8M733.4 231.5L733.6 247.7M764.4 253.7L750.1 251.9M759.3 264.4L779.1 269.1M757.6 339.5L747.5 328.9M685.8 339.5L681.4 320.2M772.0 339.5L786.4 339.5M804.1 231.5L809.6 241.5M747.5 328.9L730.5 327.7M785.5 256.3L799.9 261.8M750.1 251.9L743.6 242.4M786.4 339.5L800.8 339.5M673.8 275.0L668.9 287.1M807.4 318.1L813.7 328.1M718.5 323.5L717.4 305.5M769.6 321.1L759.1 327.0M589.8 275.0L604.9 273.9M839.7 303.5L840.7 287.0M759.3 264.4L771.8 280.0M748.6 287.5L762.1 286.3M786.4 339.5L794.1 319.9M759.3 264.4L751.7 275.9M810.3 303.5L807.4 318.1M639.3 326.9L643.4 312.1M840.7 287.0L839.5 265.0M733.6 272.6L731.8 292.3M681.0 296.6L668.9 287.1M594.0 238.5L590.5 260.0M809.9 269.2L823.9 262.1M707.4 299.8L694.9 302.1M654.2 280.1L637.3 293.2M838.7 320.0L820.2 318.6M743.6 242.4L759.8 243.0M695.6 320.0L684.6 308.8M714.5 339.5L718.5 323.5M839.5 265.0L829.9 280.0M764.4 253.7L759.8 243.0M637.3 293.2L643.4 312.1M623.2 323.3L612.9 328.2M637.3 293.2L634.3 281.0M747.5 328.9L759.1 327.0M839.7 303.5L828.2 310.5M718.5 323.5L708.1 328.8M800.8 339.5L807.4 318.1M809.9 269.2L812.4 253.3M789.9 231.5L799.2 248.7M613.9 339.5L612.9 328.2M707.6 313.6L717.4 305.5M809.9 269.2L798.4 273.1M772.0 339.5L759.1 327.0M604.9 273.9L622.8 282.2M769.6 321.1L763.1 311.7M761.6 231.5L774.0 244.2M756.6 300.3L762.1 286.3M777.2 294.7L794.5 303.1M810.3 303.5L794.5 303.1M606.0 231.5L594.0 238.5M628.2 339.5L623.2 323.3M685.6 259.3L681.4 242.4M747.5 231.5L743.6 242.4M789.9 231.5L775.8 231.5M662.6 231.5L655.0 245.0M707.4 299.8L707.6 313.6M606.0 231.5L606.8 245.9M794.5 303.1L794.1 319.9M775.8 231.5L761.6 231.5M728.1 309.9L717.4 305.5M654.2 280.1L653.7 258.8M599.5 339.5L613.9 339.5M774.0 244.2L787.3 244.3" stroke="#ebe538" stroke-width="0.95" fill="none" clip-path="url(#wc)"/>
<polygon points="606,231.5 594,238.5 590.5,260 589,290 590.5,315 594,330 599.5,339.5 829.5,339.5 836,333.5 838.7,320 840.7,287 839.5,265 837.6,247.8 832.4,231.5" fill="none" stroke="#4a4a58" stroke-width="0.9"/>
<rect x="578.5" y="176.5" width="273" height="55" fill="#3bc9aa" stroke="#5a5a5a" stroke-width="1"/>
<rect x="578.5" y="340.5" width="273" height="55" fill="#3bc9aa" stroke="#5a5a5a" stroke-width="1"/>
</svg>
<div style="position:absolute;left:870px;top:31px;width:1px;height:549px;background:#e2e2e2"></div>
<div style="position:absolute;left:129px;top:579px;width:742px;height:1px;background:#e2e2e2"></div>
</body></html>
